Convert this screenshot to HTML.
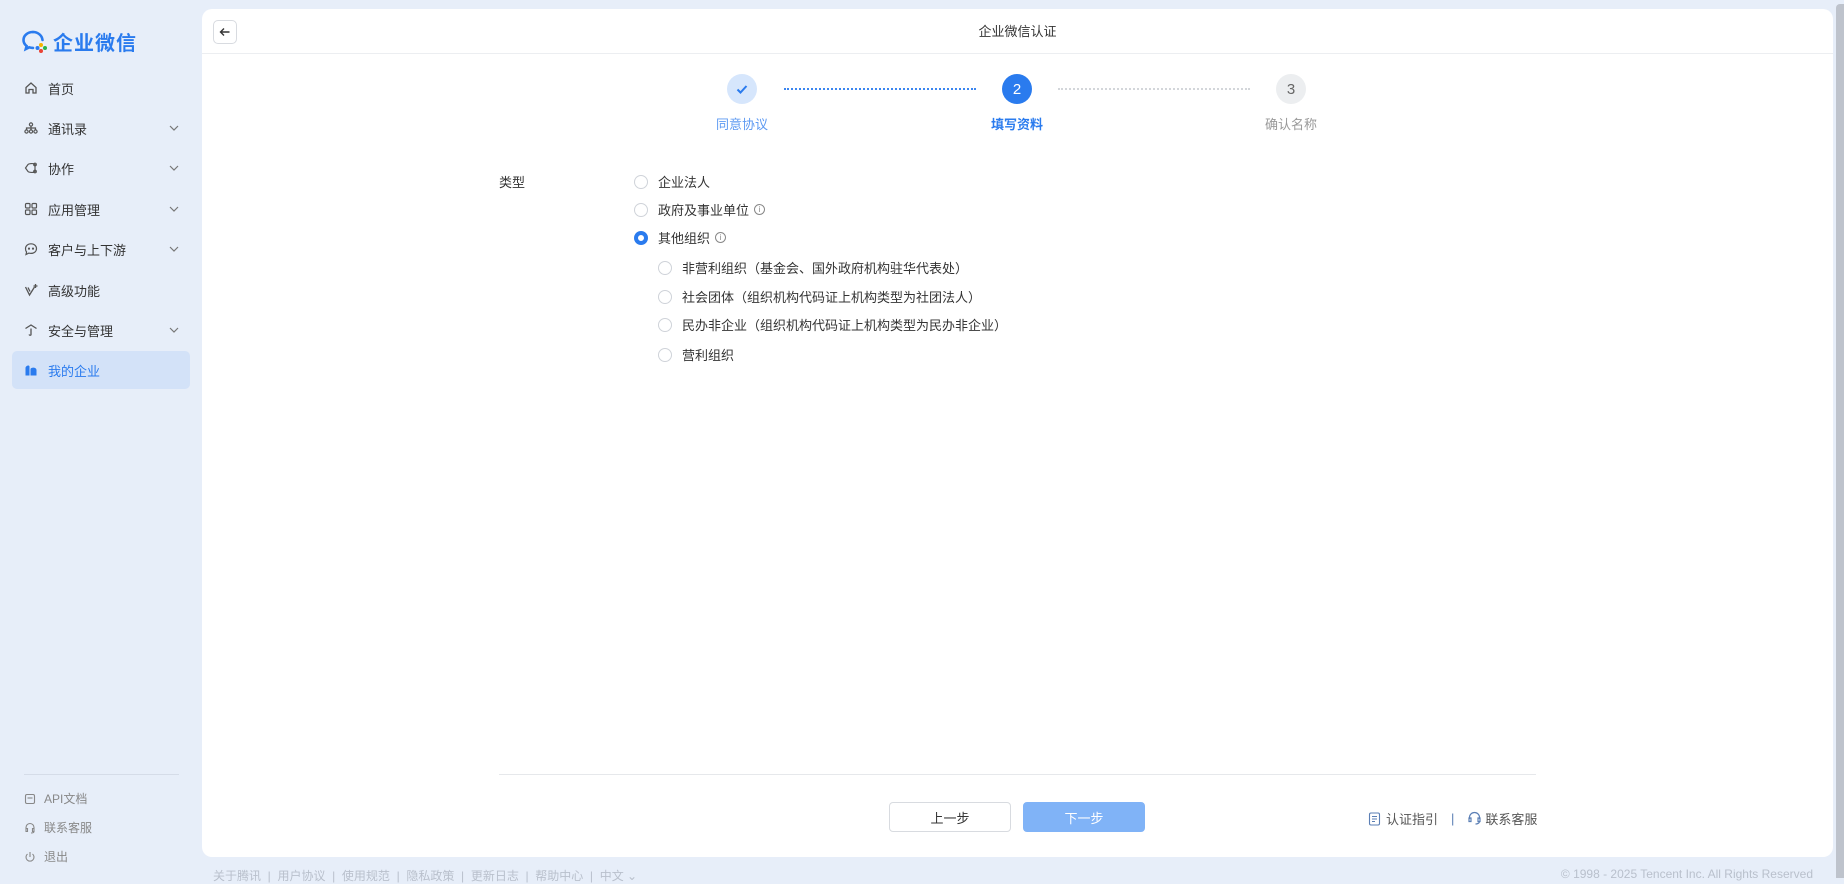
<!DOCTYPE html>
<html><head><meta charset="utf-8">
<style>
*{box-sizing:border-box;margin:0;padding:0}
body{width:1844px;height:878px;overflow:hidden;background:#e7eef9;font-family:"Liberation Sans","Noto Sans CJK SC",sans-serif;color:#333;position:relative;font-size:13px}
.abs{position:absolute}
.logo{left:21px;top:27px;display:flex;align-items:center;gap:4px;color:#2a7bee;font-size:20px;font-weight:bold;letter-spacing:1px}
.nav{left:12px;width:178px;height:38px;display:flex;align-items:center;padding-left:12px;font-size:13px;color:#333;border-radius:5px}
.nav svg{width:14px;height:14px;margin-right:10px}
.nav .chev{position:absolute;left:156px;top:13px;width:12px;height:12px;margin:0}
.nav.act{background:#d3e2f8;color:#2a7bee}
.card{left:202px;top:9px;width:1631px;height:848px;background:#fff;border-radius:10px}
.hdr{left:0;top:0;width:100%;height:45px;border-bottom:1px solid #eceef1;text-align:center;line-height:46px;font-size:13px;color:#333}
.back{left:11px;top:11px;width:24px;height:24px;border:1px solid #d8dbe0;border-radius:5px;display:flex;align-items:center;justify-content:center}
.step{width:30px;height:30px;border-radius:50%;display:flex;align-items:center;justify-content:center;font-size:15px}
.lbl{font-size:13px;width:100px;text-align:center}
.radio{width:14px;height:14px;border:1px solid #cfd3d9;border-radius:50%;background:#fff}
.radio.on{border:4px solid #2a7bee}
.opt{display:flex;align-items:center;font-size:13px;color:#333}
.opt .radio{margin-right:10px}
.info{display:inline-block;width:11px;height:11px;border:1px solid #888;border-radius:50%;font-size:8px;line-height:9px;text-align:center;color:#888;margin-left:5px;font-style:normal}
.btn{height:30px;width:122px;border-radius:4px;display:flex;align-items:center;justify-content:center;font-size:13px}
.side2{left:24px;display:flex;align-items:center;color:#888;font-size:12px}
.side2 svg{margin-right:8px}
.foot{top:867px;font-size:12px;color:#b9c0cc}
</style></head><body>

<div class="abs logo">
<svg width="28" height="26" viewBox="0 0 28 26"><path d="M12 3C6.5 3 2.5 6.6 2.5 11c0 2.4 1.2 4.5 3.1 6l-.8 3 3.4-1.7c1.2.4 2.5.6 3.8.6" fill="none" stroke="#2a7bee" stroke-width="2.6" stroke-linecap="round"/><path d="M21.5 11C21 6.5 17 3 12 3" fill="none" stroke="#2a7bee" stroke-width="2.6" stroke-linecap="round"/><circle cx="20" cy="16" r="2" fill="#f5b400"/><circle cx="24" cy="19" r="2" fill="#2ab34b"/><circle cx="20" cy="22" r="2" fill="#ea4335"/><circle cx="16.5" cy="19" r="2" fill="#2a7bee"/></svg>
<span>企业微信</span></div>

<div class="abs nav" style="top:69px"><svg viewBox="0 0 14 14" fill="none" stroke="#555" stroke-width="1.3"><path d="M2 6.5L7 2l5 4.5V12H9V8.5H5V12H2z"/></svg>首页</div>
<div class="abs nav" style="top:109px"><svg viewBox="0 0 14 14" fill="none" stroke="#555" stroke-width="1.2"><circle cx="7" cy="3.5" r="1.6"/><circle cx="2.5" cy="10.5" r="1.6"/><circle cx="7" cy="10.5" r="1.6"/><circle cx="11.5" cy="10.5" r="1.6"/><path d="M2.5 9V7h9v2M7 5v4"/></svg>通讯录<svg class="chev" viewBox="0 0 12 12" fill="none" stroke="#777" stroke-width="1.2"><path d="M2 4l4 4 4-4"/></svg></div>
<div class="abs nav" style="top:149px"><svg viewBox="0 0 14 14" fill="none" stroke="#555" stroke-width="1.2"><path d="M4 3.5C5 2.5 10 2 11 3.5v7c-1 1.5-6 1-7 0L1.5 7z"/><circle cx="11" cy="3.5" r="1.3"/><circle cx="11" cy="10.5" r="1.3"/></svg>协作<svg class="chev" viewBox="0 0 12 12" fill="none" stroke="#777" stroke-width="1.2"><path d="M2 4l4 4 4-4"/></svg></div>
<div class="abs nav" style="top:190px"><svg viewBox="0 0 14 14" fill="none" stroke="#555" stroke-width="1.2"><rect x="1.5" y="1.5" width="4.5" height="4.5" rx="1"/><rect x="8" y="1.5" width="4.5" height="4.5" rx="1"/><rect x="1.5" y="8" width="4.5" height="4.5" rx="1"/><rect x="8" y="8" width="4.5" height="4.5" rx="1"/></svg>应用管理<svg class="chev" viewBox="0 0 12 12" fill="none" stroke="#777" stroke-width="1.2"><path d="M2 4l4 4 4-4"/></svg></div>
<div class="abs nav" style="top:230px"><svg viewBox="0 0 14 14" fill="none" stroke="#555" stroke-width="1.2"><path d="M7 1.8c3.2 0 5.5 2.1 5.5 4.8S10.2 11.4 7 11.4c-.8 0-1.5-.1-2.2-.3L2 12.5l.6-2.5C1.8 9.1 1.5 7.9 1.5 6.6 1.5 3.9 3.8 1.8 7 1.8z"/><circle cx="5" cy="6.6" r=".5" fill="#555"/><circle cx="9" cy="6.6" r=".5" fill="#555"/></svg>客户与上下游<svg class="chev" viewBox="0 0 12 12" fill="none" stroke="#777" stroke-width="1.2"><path d="M2 4l4 4 4-4"/></svg></div>
<div class="abs nav" style="top:271px"><svg viewBox="0 0 14 14" fill="none" stroke="#555" stroke-width="1.3"><path d="M1.5 4l4 8 5-8M4 4.5l2 4"/><path d="M11.5 1v4M9.5 3h4"/></svg>高级功能</div>
<div class="abs nav" style="top:311px"><svg viewBox="0 0 14 14" fill="none" stroke="#555" stroke-width="1.3"><path d="M1.5 5.5L7 2l5.5 3.5M7 5.5v6c0 1-1.5 1-2 0"/></svg>安全与管理<svg class="chev" viewBox="0 0 12 12" fill="none" stroke="#777" stroke-width="1.2"><path d="M2 4l4 4 4-4"/></svg></div>
<div class="abs nav act" style="top:351px"><svg viewBox="0 0 14 14"><path d="M1.5 5c0-2 3.5-3.5 4-1.5V12.5h-4z M6.5 6c.5-2 6-2 6 1V12.5h-6z" fill="#2a7bee"/></svg>我的企业</div>

<div class="abs" style="left:24px;top:774px;width:155px;height:1px;background:#d5dce8"></div>
<div class="abs side2" style="top:790px"><svg width="12" height="12" viewBox="0 0 12 12" fill="none" stroke="#888" stroke-width="1.1"><rect x="1.5" y="1.5" width="9" height="9" rx="1.5"/><path d="M3.5 5h5"/></svg>API文档</div>
<div class="abs side2" style="top:819px"><svg width="12" height="12" viewBox="0 0 12 12" fill="none" stroke="#888" stroke-width="1.1"><path d="M2 7V5.5a4 4 0 018 0V7M2 6.5h1.5v3H2zM10 6.5H8.5v3H10zM10 9.5c0 1-1.5 1.5-3 1.5"/></svg>联系客服</div>
<div class="abs side2" style="top:848px"><svg width="12" height="12" viewBox="0 0 12 12" fill="none" stroke="#888" stroke-width="1.1"><path d="M6 1v5M3.5 3a4 4 0 105 0"/></svg>退出</div>

<div class="abs foot" style="left:213px">关于腾讯 &nbsp;|&nbsp; 用户协议 &nbsp;|&nbsp; 使用规范 &nbsp;|&nbsp; 隐私政策 &nbsp;|&nbsp; 更新日志 &nbsp;|&nbsp; 帮助中心 &nbsp;|&nbsp; 中文 ⌄</div>
<div class="abs foot" style="right:31px">© 1998 - 2025 Tencent Inc. All Rights Reserved</div>
<div class="abs" style="left:1836px;top:4px;width:8px;height:874px;background:#bec3cc;border-radius:4px 0 0 0"></div>

<div class="abs card">
 <div class="abs hdr">企业微信认证</div>
 <div class="abs back"><svg width="12" height="12" viewBox="0 0 12 12" fill="none" stroke="#333" stroke-width="1.4"><path d="M10.5 6h-9M5 2.5L1.5 6 5 9.5"/></svg></div>

 <div class="abs step" style="left:525px;top:65px;background:#d6e6fc"><svg width="14" height="14" viewBox="0 0 14 14" fill="none" stroke="#2a7bee" stroke-width="2"><path d="M2.5 7.5l3 3 6-6.5"/></svg></div>
 <div class="abs step" style="left:800px;top:65px;background:#2a7bee;color:#fff">2</div>
 <div class="abs step" style="left:1074px;top:65px;background:#eceef0;color:#666">3</div>
 <div class="abs" style="left:582px;top:79px;width:192px;border-top:2px dotted #3b86f0"></div>
 <div class="abs" style="left:856px;top:79px;width:192px;border-top:2px dotted #d3d6da"></div>
 <div class="abs lbl" style="left:490px;top:105px;color:#5e9af2">同意协议</div>
 <div class="abs lbl" style="left:765px;top:105px;color:#2a7bee;font-weight:bold">填写资料</div>
 <div class="abs lbl" style="left:1039px;top:105px;color:#999">确认名称</div>

 <div class="abs" style="left:297px;top:163px;font-size:13px">类型</div>
 <div class="abs opt" style="left:432px;top:163px"><span class="radio"></span>企业法人</div>
 <div class="abs opt" style="left:432px;top:191px"><span class="radio"></span>政府及事业单位<i class="info">i</i></div>
 <div class="abs opt" style="left:432px;top:219px"><span class="radio on"></span>其他组织<i class="info">i</i></div>
 <div class="abs opt" style="left:456px;top:249px"><span class="radio"></span>非营利组织（基金会、国外政府机构驻华代表处）</div>
 <div class="abs opt" style="left:456px;top:278px"><span class="radio"></span>社会团体（组织机构代码证上机构类型为社团法人）</div>
 <div class="abs opt" style="left:456px;top:306px"><span class="radio"></span>民办非企业（组织机构代码证上机构类型为民办非企业）</div>
 <div class="abs opt" style="left:456px;top:336px"><span class="radio"></span>营利组织</div>

 <div class="abs" style="left:297px;top:765px;width:1037px;height:1px;background:#e6e8eb"></div>
 <div class="abs btn" style="left:687px;top:793px;border:1px solid #d8dbe0;color:#333">上一步</div>
 <div class="abs btn" style="left:821px;top:793px;background:#80b3f7;color:#fff">下一步</div>
 <div class="abs" style="left:1166px;top:800px;display:flex;align-items:center;font-size:13px;color:#555">
  <svg width="13" height="14" viewBox="0 0 13 14" fill="none" stroke="#5b7fb5" stroke-width="1.1" style="margin-right:5px"><rect x="1.5" y="1" width="10" height="12" rx="1.5"/><path d="M4 4.5h5M4 7h5M4 9.5h3"/></svg>认证指引
  <span style="margin:0 13px;color:#5b7fb5">|</span>
  <svg width="15" height="15" viewBox="0 0 15 15" fill="none" stroke="#5b7fb5" stroke-width="1.2" style="margin-right:3px"><path d="M2.5 8V6.5a5 5 0 0110 0V8M2 7h2v3.5H2zM13 7h-2v3.5h2zM12.5 10.5c0 1.5-2 2.5-4 2.5"/></svg>联系客服
 </div>
</div>
</body></html>
